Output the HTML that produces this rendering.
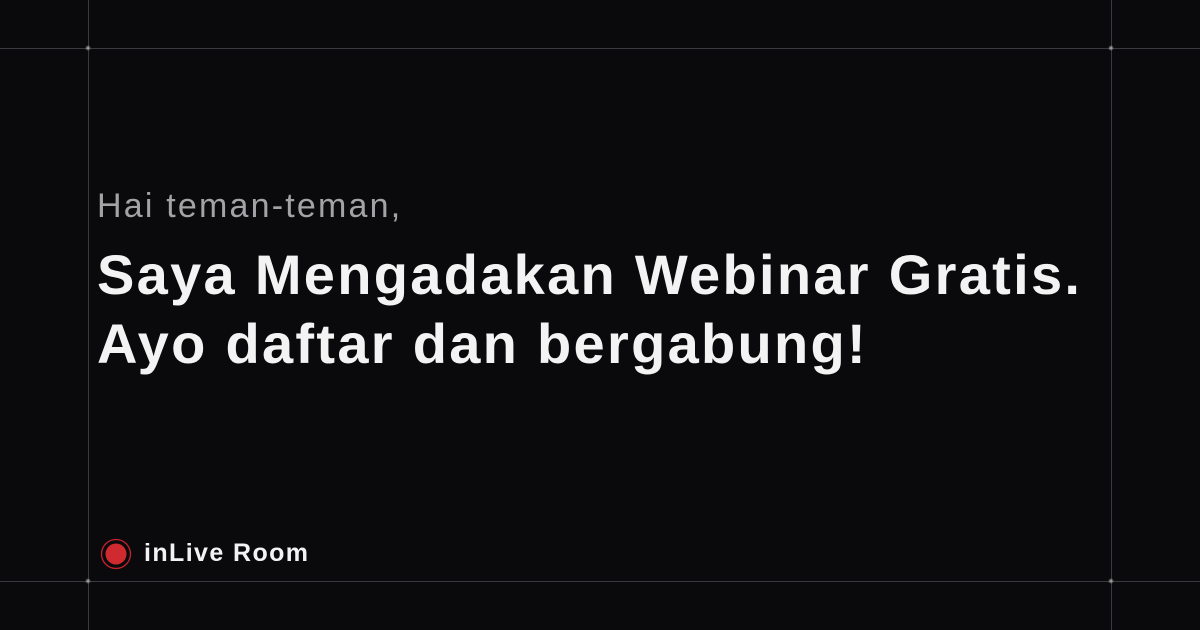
<!DOCTYPE html>
<html><head><meta charset="utf-8"><style>
html,body{margin:0;padding:0;}
body{width:1200px;height:630px;background:#0a0a0c;position:relative;overflow:hidden;font-family:"Liberation Sans",sans-serif;}
.h{position:absolute;left:0;width:1200px;height:1px;background:#3a3a3e;}
.v{position:absolute;top:0;height:630px;width:1px;background:#3a3a3e;}
.dot{position:absolute;width:6px;height:6px;border-radius:50%;background:radial-gradient(#bbb,rgba(150,150,150,0) 70%);}
.t{position:absolute;left:97px;color:#f3f3f3;white-space:nowrap;}
</style></head><body>
<div class="h" style="top:48px"></div>
<div class="h" style="top:581px"></div>
<div class="v" style="left:88px"></div>
<div class="v" style="left:1111px"></div>
<div class="dot" style="left:85px;top:45px"></div>
<div class="dot" style="left:1108px;top:45px"></div>
<div class="dot" style="left:85px;top:578px"></div>
<div class="dot" style="left:1108px;top:578px"></div>
<div class="t" style="top:187px;font-size:34px;line-height:39px;color:#a3a3a6;letter-spacing:2.2px;">Hai teman-teman,</div>
<div class="t" style="top:240px;font-size:56px;font-weight:bold;line-height:69px;letter-spacing:2.3px;">Saya Mengadakan Webinar Gratis.<br>Ayo daftar dan bergabung!</div>
<svg style="position:absolute;left:100px;top:538px" width="32" height="32"><circle cx="16" cy="16" r="14.5" fill="none" stroke="#c4232b" stroke-width="1.3"/><circle cx="16" cy="16" r="10.5" fill="#cf2a2f"/></svg>
<div class="t" style="left:144px;top:539px;font-size:25px;font-weight:bold;letter-spacing:1.4px;">inLive Room</div>
</body></html>
